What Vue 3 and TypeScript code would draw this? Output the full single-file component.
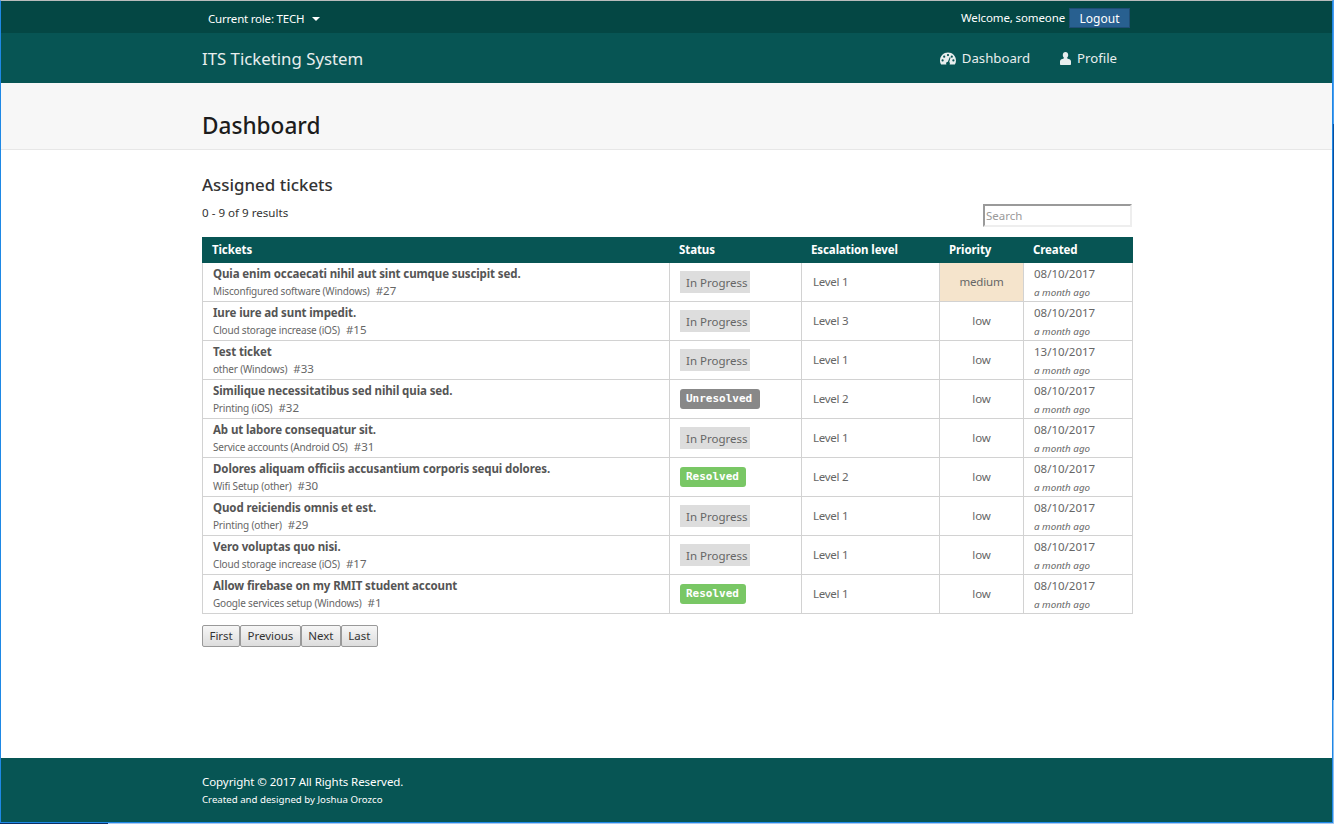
<script setup lang="ts">
interface Ticket {
    title: string
    category: string
    id: number
    status: 'In Progress' | 'Unresolved' | 'Resolved'
    level: number
    priority: string
    created: string
}

const tickets: Ticket[] = [
    { title: 'Quia enim occaecati nihil aut sint cumque suscipit sed.', category: 'Misconfigured software (Windows)', id: 27, status: 'In Progress', level: 1, priority: 'medium', created: '08/10/2017' },
    { title: 'Iure iure ad sunt impedit.', category: 'Cloud storage increase (iOS)', id: 15, status: 'In Progress', level: 3, priority: 'low', created: '08/10/2017' },
    { title: 'Test ticket', category: 'other (Windows)', id: 33, status: 'In Progress', level: 1, priority: 'low', created: '13/10/2017' },
    { title: 'Similique necessitatibus sed nihil quia sed.', category: 'Printing (iOS)', id: 32, status: 'Unresolved', level: 2, priority: 'low', created: '08/10/2017' },
    { title: 'Ab ut labore consequatur sit.', category: 'Service accounts (Android OS)', id: 31, status: 'In Progress', level: 1, priority: 'low', created: '08/10/2017' },
    { title: 'Dolores aliquam officiis accusantium corporis sequi dolores.', category: 'Wifi Setup (other)', id: 30, status: 'Resolved', level: 2, priority: 'low', created: '08/10/2017' },
    { title: 'Quod reiciendis omnis et est.', category: 'Printing (other)', id: 29, status: 'In Progress', level: 1, priority: 'low', created: '08/10/2017' },
    { title: 'Vero voluptas quo nisi.', category: 'Cloud storage increase (iOS)', id: 17, status: 'In Progress', level: 1, priority: 'low', created: '08/10/2017' },
    { title: 'Allow firebase on my RMIT student account', category: 'Google services setup (Windows)', id: 1, status: 'Resolved', level: 1, priority: 'low', created: '08/10/2017' }
]

const pager = ['First', 'Previous', 'Next', 'Last']

function statusClass(status: Ticket['status']) {
    return status.toLowerCase().replace(' ', '-')
}
</script>

<template>
    <div class="screen">
        <div class="screen-row">
            <div class="window">
                <div class="topbar">
                    <div class="container topbar-inner">
                        <div class="role">Current role: TECH <span class="caret"></span></div>
                        <div class="welcome">
                            <span>Welcome, someone</span>
                            <button class="logout">Logout</button>
                        </div>
                    </div>
                </div>

                <nav class="navbar">
                    <div class="container navbar-inner">
                        <span class="brand">ITS Ticketing System</span>
                        <div class="nav-links">
                            <a class="nav-link">
                                <svg class="icon-dash" viewBox="0 0 16 13" width="16" height="13">
                                    <path fill="#e8eeee" fill-rule="evenodd" d="M8 0.5C3.6 0.5 0 4 0 8.4c0 1.6 0.5 3 1.2 4.1h13.6c0.8-1.1 1.2-2.5 1.2-4.1C16 4 12.4 0.5 8 0.5zM8 2a1.1 1.1 0 1 1 0 2.2A1.1 1.1 0 0 1 8 2zM4.2 3.6a1.1 1.1 0 1 1 0 2.2 1.1 1.1 0 0 1 0-2.2zM2.6 7.3a1.1 1.1 0 1 1 0 2.2 1.1 1.1 0 0 1 0-2.2zM13.4 7.3a1.1 1.1 0 1 1 0 2.2 1.1 1.1 0 0 1 0-2.2zM11.8 3.6a1.1 1.1 0 1 1 0 2.2 1.1 1.1 0 0 1 0-2.2zM9.7 5.2l0.9 0.3-1.4 4.6c0.4 0.3 0.7 0.8 0.7 1.4 0 0.4-0.1 0.7-0.3 1H6.4a2 2 0 0 1-0.3-1c0-1 0.8-1.8 1.8-1.8z" />
                                </svg>
                                Dashboard
                            </a>
                            <a class="nav-link">
                                <svg class="icon-user" viewBox="0 0 11 13" width="11" height="13">
                                    <path fill="#e8eeee" d="M5.5 0C3.9 0 2.8 1.3 2.8 3.1c0 1.3 0.6 2.5 1.4 3C3.6 6.6 2.6 6.9 1.6 7.3 0.6 7.7 0 8.5 0 9.5V12c0 0.6 0.4 1 1 1h9c0.6 0 1-0.4 1-1V9.5c0-1-0.6-1.8-1.6-2.2-1-0.4-2-0.7-2.6-1.2 0.8-0.5 1.4-1.7 1.4-3C8.2 1.3 7.1 0 5.5 0z" />
                                </svg>
                                Profile
                            </a>
                        </div>
                    </div>
                </nav>

                <header class="page-header">
                    <div class="container">
                        <h1>Dashboard</h1>
                    </div>
                </header>

                <main class="container content">
                    <h2>Assigned tickets</h2>
                    <div class="table-tools">
                        <span class="results">0 - 9 of 9 results</span>
                        <input class="search" type="text" placeholder="Search" />
                    </div>

                    <table class="tickets">
                        <colgroup>
                            <col style="width: 467px" />
                            <col style="width: 132px" />
                            <col style="width: 138px" />
                            <col style="width: 84px" />
                            <col style="width: 109px" />
                        </colgroup>
                        <thead>
                            <tr>
                                <th>Tickets</th>
                                <th>Status</th>
                                <th>Escalation level</th>
                                <th>Priority</th>
                                <th>Created</th>
                            </tr>
                        </thead>
                        <tbody>
                            <tr v-for="t in tickets" :key="t.id">
                                <td class="cell-ticket">
                                    <div class="ticket-title">{{ t.title }}</div>
                                    <div class="ticket-meta"><span class="category">{{ t.category }}</span><span class="ticket-id">#{{ t.id }}</span></div>
                                </td>
                                <td class="cell-status"><span class="status" :class="statusClass(t.status)">{{ t.status }}</span></td>
                                <td class="cell-level">Level {{ t.level }}</td>
                                <td class="cell-priority" :class="{ medium: t.priority === 'medium' }">{{ t.priority }}</td>
                                <td class="cell-created">
                                    <div class="date">{{ t.created }}</div>
                                    <div class="ago">a month ago</div>
                                </td>
                            </tr>
                        </tbody>
                    </table>

                    <div class="pager">
                        <button v-for="p in pager" :key="p">{{ p }}</button>
                    </div>
                </main>

                <footer class="footer">
                    <div class="container">
                        <div class="copyright">Copyright © 2017 All Rights Reserved.</div>
                        <div class="credit">Created and designed by Joshua Orozco</div>
                    </div>
                </footer>
            </div>
            <div class="edge-right"></div>
        </div>
        <div class="edge-bottom"></div>
    </div>
</template>

<style scoped>
.screen {
    display: flex;
    flex-direction: column;
    height: 824px;
}

.screen-row {
    display: flex;
    flex: 1;
    min-height: 0;
}

.edge-right {
    width: 1px;
    flex: none;
    background: linear-gradient(#4a9df0 0, #4a9df0 124px, #0b4f9e 124px, #0b4f9e 700px, #8fc0f2 700px);
}

.edge-bottom {
    height: 1px;
    flex: none;
    background: linear-gradient(90deg, #0b2f66 0, #0b2f66 108px, #a8c8f0 108px);
}

.window {
    display: flex;
    flex: 1;
    flex-direction: column;
    box-sizing: border-box;
    min-width: 0;
    border-top: 1px solid #b9bcbc;
    border-left: 1px solid #1e88e5;
    border-right: 1px solid #1e88e5;
    border-bottom: 1px solid #1e88e5;
    font-family: "Noto Sans", "Open Sans", sans-serif;
    font-size: 12.5px;
    color: #333;
    background: #fff;
}

.container {
    width: 930px;
    margin: 0 auto 0 201px;
}

.topbar {
    height: 32px;
    flex: none;
    background: #044744;
    color: #fff;
}

.topbar-inner {
    display: flex;
    justify-content: space-between;
    height: 100%;
}

.role {
    padding: 9px 0 0 6px;
    line-height: 18px;
    font-size: 11.5px;
    letter-spacing: -0.2px;
}

.caret {
    display: inline-block;
    margin-left: 5px;
    vertical-align: 2px;
    border-top: 4px solid #fff;
    border-left: 4px solid transparent;
    border-right: 4px solid transparent;
}

.welcome {
    display: flex;
    align-items: flex-start;
    gap: 4px;
    margin-right: 2px;
    padding-top: 7px;
    font-size: 11.5px;
    letter-spacing: -0.12px;
    line-height: 19px;
}

.logout {
    width: 61px;
    height: 20px;
    padding: 0;
    border: 1px solid #204d74;
    background: #286090;
    color: #fff;
    font: inherit;
    font-size: 12px;
    letter-spacing: 0;
}

.navbar {
    height: 50px;
    flex: none;
    background: #075554;
    color: #e8eeee;
}

.navbar-inner {
    display: flex;
    justify-content: space-between;
    align-items: center;
    height: 100%;
}

.brand {
    margin-top: 2px;
    font-size: 16.8px;
    line-height: 48px;
}

.nav-links {
    display: flex;
    gap: 30px;
    margin-right: 15px;
    font-size: 13.2px;
}

.nav-link {
    display: flex;
    align-items: center;
    gap: 6px;
}

.page-header {
    height: 66px;
    flex: none;
    background: #f7f7f7;
    border-bottom: 1px solid #e7e7e7;
}

h1 {
    margin: 0;
    padding-top: 27px;
    font-size: 22.6px;
    font-weight: 500;
    line-height: 32px;
    color: #1c1c1c;
}

.content {
    flex: 1;
}

h2 {
    margin: 0;
    padding-top: 24px;
    font-size: 16.9px;
    font-weight: 500;
    line-height: 22px;
    color: #333;
}

.table-tools {
    display: flex;
    justify-content: space-between;
    align-items: flex-start;
    height: 41px;
    padding-top: 8px;
    box-sizing: border-box;
}

.results {
    font-size: 11.6px;
    line-height: 18px;
}

.search {
    box-sizing: border-box;
    width: 149px;
    height: 23px;
    margin-top: 0;
    padding: 0 1px;
    border: 2px solid;
    border-color: #9a9a9a #eeeeee #eeeeee #9a9a9a;
    font: inherit;
    font-size: 11.5px;
    outline: none;
}

.search::placeholder {
    color: #9a9a9a;
}

.tickets {
    width: 930px;
    border-collapse: collapse;
    table-layout: fixed;
}

th {
    height: 25px;
    padding: 0 0 1px 9px;
    box-sizing: border-box;
    border: 1px solid #075554;
    background: #075554;
    color: #fff;
    font-size: 11.5px;
    letter-spacing: -0.1px;
    font-weight: 700;
    text-align: left;
}

td {
    height: 39px;
    padding: 0;
    box-sizing: border-box;
    border: 1px solid #d2d2d2;
    color: #666;
    font-size: 11.5px;
}

.cell-ticket {
    padding: 1px 0 0 10px;
}

.ticket-title {
    font-weight: 700;
    color: #555;
    font-size: 11.5px;
    letter-spacing: -0.11px;
    line-height: 17px;
}

.ticket-meta {
    line-height: 18px;
}

.category {
    font-size: 10px;
    letter-spacing: -0.18px;
}

.ticket-id {
    margin-left: 6px;
    font-size: 11.5px;
}

.cell-status {
    padding-left: 10px;
}

.status {
    display: inline-block;
    box-sizing: border-box;
    height: 22px;
    line-height: 23px;
    vertical-align: middle;
    white-space: nowrap;
}

.in-progress {
    width: 70px;
    padding-left: 6px;
    background: #dddddd;
    color: #666;
}

.unresolved,
.resolved {
    height: 20px;
    line-height: 19px;
    padding: 0 6px;
    border-radius: 3px;
    color: #fff;
    font-family: "DejaVu Sans Mono", "Liberation Mono", monospace;
    font-size: 11px;
    font-weight: 700;
    margin-bottom: 1px;
}

.unresolved {
    width: 80px;
    background: #888888;
}

.resolved {
    width: 66px;
    background: #79c765;
}

.cell-level {
    padding: 0 0 2px 11px;
    letter-spacing: -0.25px;
}

.cell-priority {
    padding-bottom: 2px;
    text-align: center;
    letter-spacing: -0.15px;
}

.cell-priority.medium {
    background: #f5e4cc;
}

.cell-created {
    padding-left: 10px;
}

.date {
    line-height: 20px;
}

.ago {
    font-size: 9.8px;
    font-style: italic;
    line-height: 17px;
}

.pager {
    display: flex;
    margin-top: 11px;
}

.pager button {
    height: 22px;
    padding: 0 6.5px 2px;
    border: 1px solid #999;
    border-radius: 2px;
    background: linear-gradient(#f6f6f6, #dddddd);
    color: #333;
    font: inherit;
    font-size: 11.5px;
    letter-spacing: -0.05px;
}

.footer {
    height: 64px;
    flex: none;
    background: #075554;
    color: #fff;
}

.copyright {
    padding-top: 15px;
    font-size: 11.5px;
    letter-spacing: -0.07px;
    line-height: 18px;
}

.credit {
    font-size: 9.66px;
    line-height: 18px;
}
</style>

<style>
html,
body {
    margin: 0;
    overflow: hidden;
}
</style>
